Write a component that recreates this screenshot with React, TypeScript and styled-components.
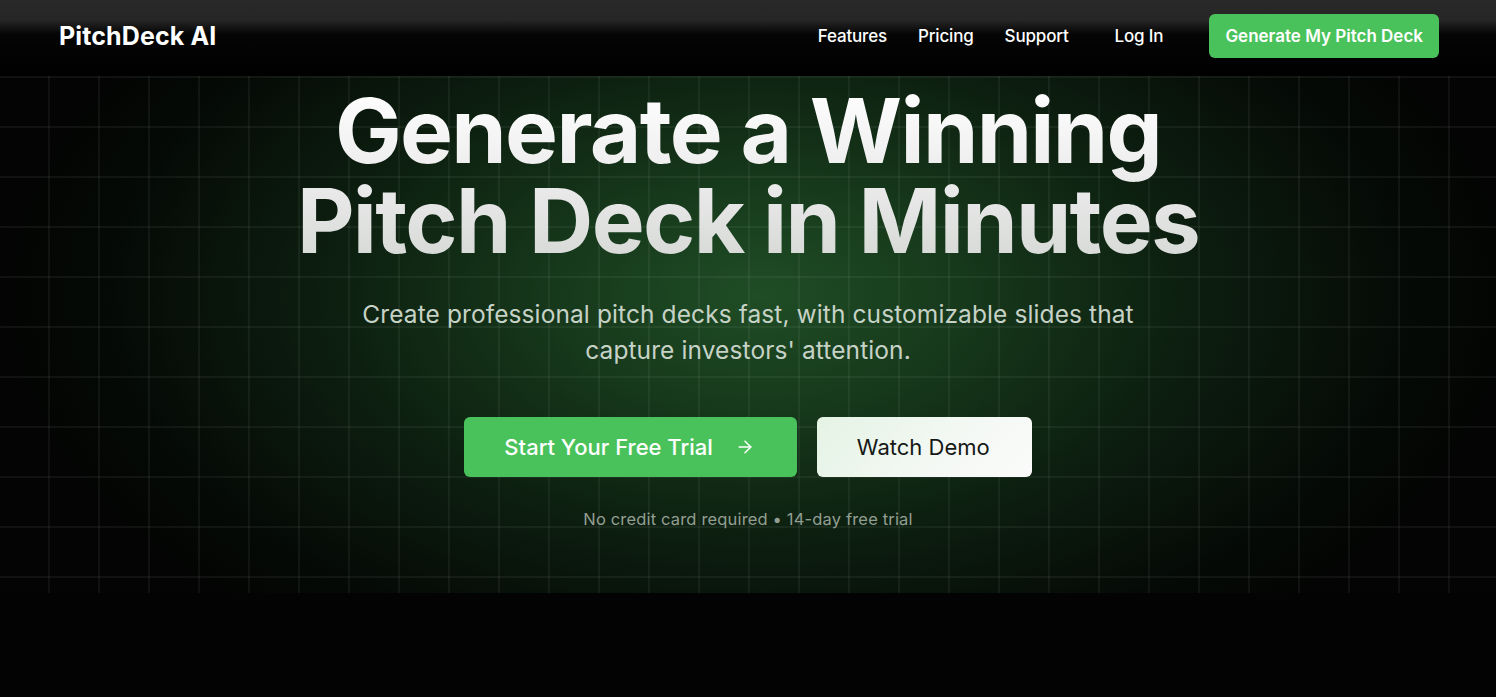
import React from "react";
import styled, { createGlobalStyle } from "styled-components";

const Global = createGlobalStyle`
  html, body { margin: 0; padding: 0; background: #030303; }
  body { font-family: Inter, "Noto Sans", Arial, sans-serif; -webkit-font-smoothing: antialiased; }
  * { box-sizing: border-box; }
`;

const Page = styled.div`
  min-height: 697px;
  background: #030303;
  display: flex;
  flex-direction: column;
`;

const Header = styled.header`
  height: 76px;
  padding: 14px 57px 18px 59px;
  display: flex;
  align-items: center;
  justify-content: space-between;
  background: linear-gradient(to bottom, #292929 0px, #262626 20px, #050505 34px, #000 76px);
`;

const Logo = styled.div`
  color: #fff;
  font-size: 25px;
  font-weight: 700;
  letter-spacing: 0.005em;
`;

const Nav = styled.nav`
  display: flex;
  align-items: center;
  gap: 31px;
`;

const NavLink = styled.a<{ $spaced?: boolean }>`
  color: #fff;
  font-size: 17px;
  font-weight: 500;
  text-decoration: none;
  letter-spacing: -0.01em;
  margin-left: ${(p) => (p.$spaced ? "15px" : "0")};
`;

const NavCta = styled.a`
  margin-left: 15px;
  height: 44px;
  padding: 0 16px;
  display: flex;
  align-items: center;
  background: #4ac25b;
  color: #fff;
  font-size: 17px;
  font-weight: 600;
  letter-spacing: 0;
  border-radius: 6px;
  text-decoration: none;
`;

const Hero = styled.section`
  position: relative;
  height: 517px;
  display: flex;
  flex-direction: column;
  align-items: center;
  padding-top: 10px;
  background-color: #030403;
  background-image:
    linear-gradient(to bottom, rgba(255, 255, 255, 0.05) 0, rgba(255, 255, 255, 0.05) 2px, transparent 2px),
    linear-gradient(to right, transparent 48px, rgba(255, 255, 255, 0.05) 48px, rgba(255, 255, 255, 0.05) 50px, transparent 50px),
    radial-gradient(ellipse 760px 430px at 760px 220px, #1f4d25 0%, #173a1c 25%, #0d2010 55%, #050a06 85%, #030403 100%);
  background-size: 50px 50px, 50px 50px, 100% 100%;
  background-position: 0 0, 0 0, 0 0;
`;

const Title = styled.h1`
  margin: 0;
  text-align: center;
  font-size: 89px;
  line-height: 90px;
  font-weight: 700;
  letter-spacing: -0.019em;
  background: linear-gradient(to bottom, #ffffff 0%, #ececec 50%, #d5d8d5 100%);
  -webkit-background-clip: text;
  background-clip: text;
  color: transparent;
`;

const Subtitle = styled.p`
  margin: 30px 0 0;
  max-width: 820px;
  text-align: center;
  font-size: 24.5px;
  line-height: 36px;
  font-weight: 400;
  color: #c7d2c7;
  letter-spacing: 0.004em;
`;

const Actions = styled.div`
  margin-top: 49px;
  display: flex;
  gap: 20px;
`;

const Button = styled.a<{ $variant: "primary" | "light" }>`
  height: 60px;
  display: flex;
  align-items: center;
  gap: 22px;
  padding: 0 42px 0 40px;
  border-radius: 6px;
  font-size: 22px;
  font-weight: ${(p) => (p.$variant === "primary" ? 500 : 400)};
  letter-spacing: 0;
  text-decoration: none;
  color: ${(p) => (p.$variant === "primary" ? "#fff" : "#161816")};
  background: ${(p) =>
    p.$variant === "primary"
      ? "#4ac25b"
      : "linear-gradient(135deg, #e4f3e4 0%, #f4f8f4 60%, #fafbfa 100%)"};
`;

const Note = styled.p`
  margin: 32px 0 0;
  font-size: 16.5px;
  color: #939e93;
  letter-spacing: 0.01em;
`;

const Arrow = () => (
  <svg width="20" height="20" viewBox="0 0 24 24" fill="none" stroke="currentColor" strokeWidth="1.8" strokeLinecap="round" strokeLinejoin="round">
    <path d="M5 12h14" />
    <path d="m12 5 7 7-7 7" />
  </svg>
);

export default function App() {
  return (
    <Page>
      <Global />
      <Header>
        <Logo>PitchDeck AI</Logo>
        <Nav>
          <NavLink href="#">Features</NavLink>
          <NavLink href="#">Pricing</NavLink>
          <NavLink href="#">Support</NavLink>
          <NavLink href="#" $spaced>Log In</NavLink>
          <NavCta href="#">Generate My Pitch Deck</NavCta>
        </Nav>
      </Header>
      <Hero>
        <Title>
          Generate a Winning
          <br />
          Pitch Deck in Minutes
        </Title>
        <Subtitle>
          Create professional pitch decks fast, with customizable slides that capture investors' attention.
        </Subtitle>
        <Actions>
          <Button $variant="primary" href="#">
            Start Your Free Trial
            <Arrow />
          </Button>
          <Button $variant="light" href="#">Watch Demo</Button>
        </Actions>
        <Note>No credit card required • 14-day free trial</Note>
      </Hero>
    </Page>
  );
}
